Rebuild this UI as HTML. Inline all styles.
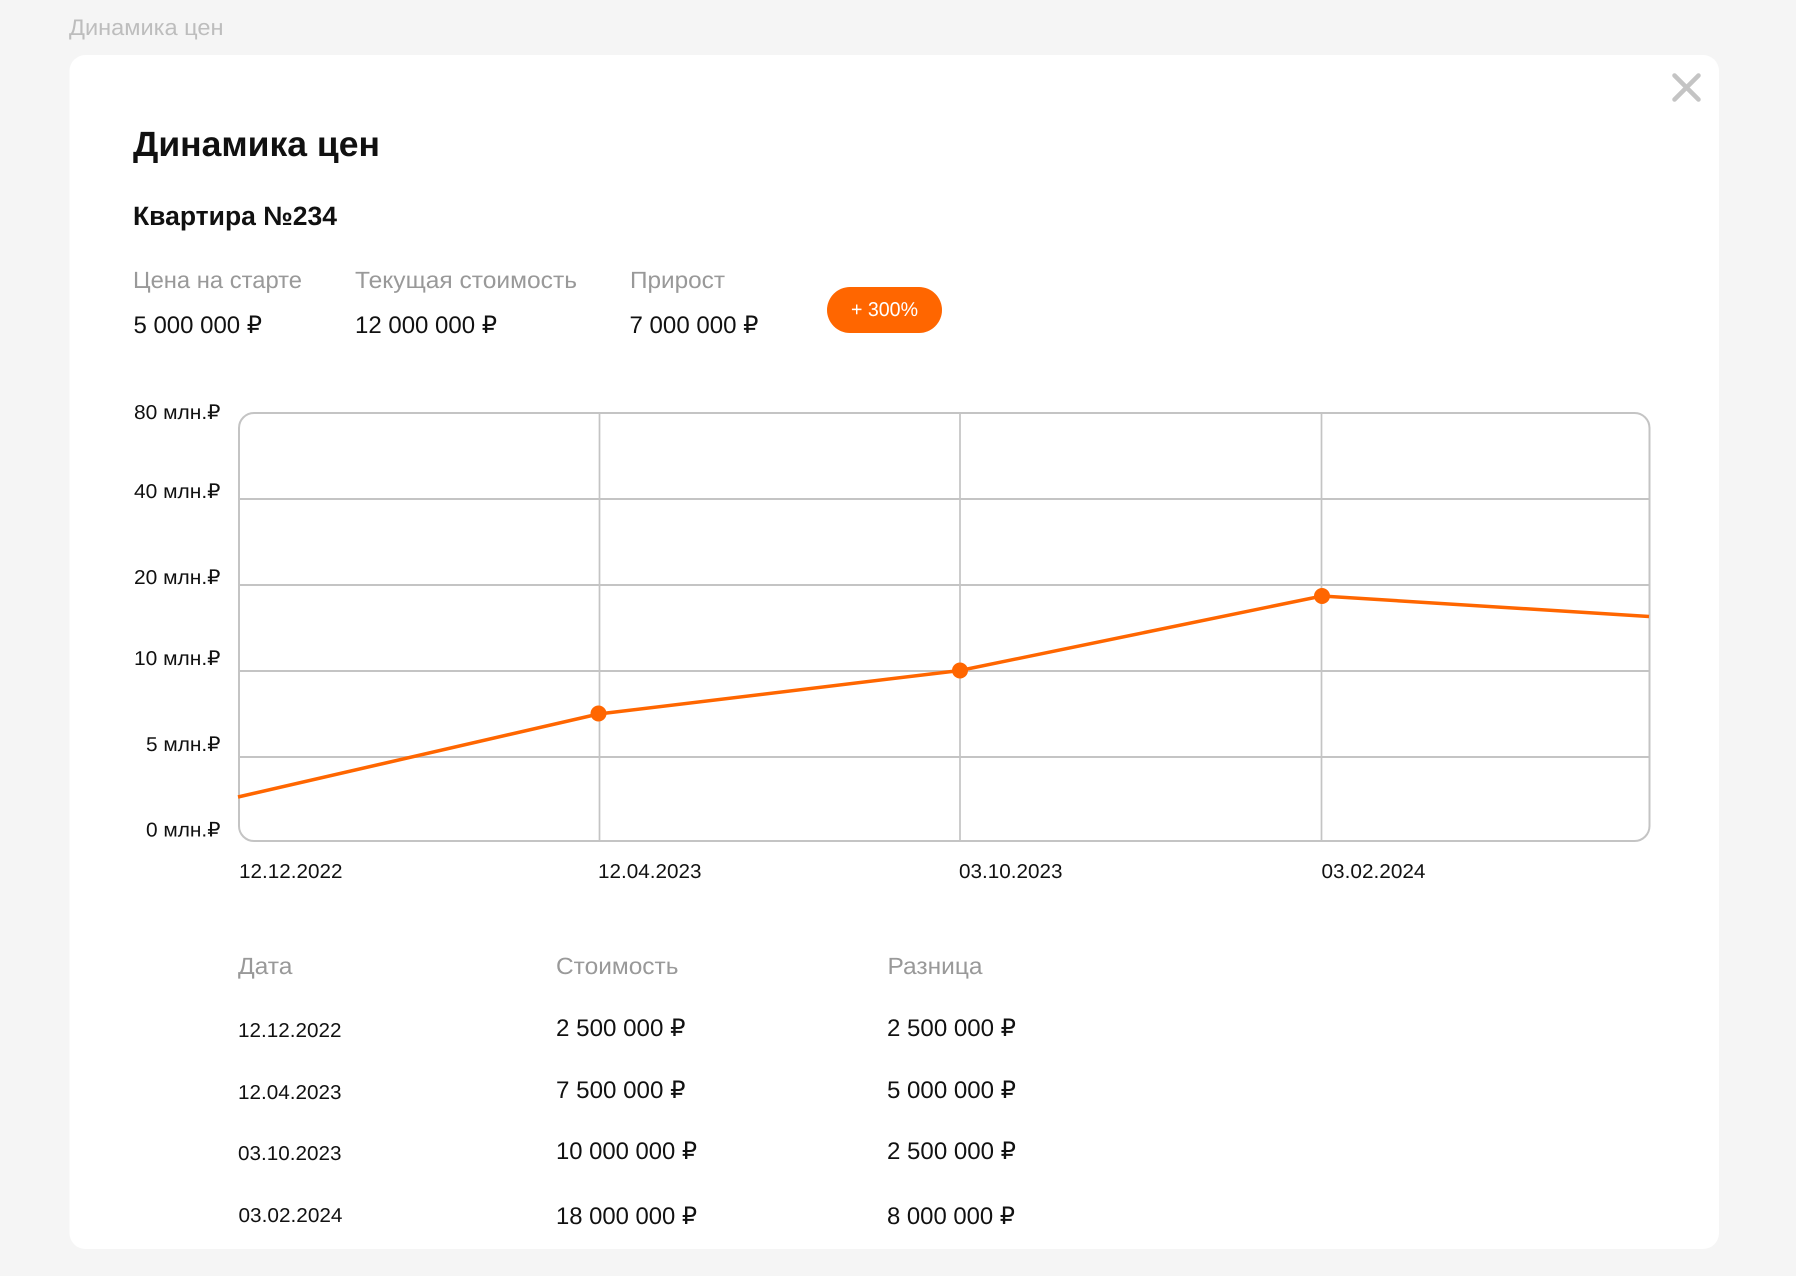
<!DOCTYPE html>
<html lang="ru"><head><meta charset="utf-8"><title>Динамика цен</title>
<style>
html,body{margin:0;padding:0;background:#f5f5f5;width:1796px;height:1276px;overflow:hidden}
svg{display:block}
text{font-family:"Liberation Sans","DejaVu Sans",sans-serif;text-rendering:geometricPrecision}
.l{font-size:23.5px;fill:#999}
.v{font-size:24px;fill:#111}
.a{font-size:20px;fill:#111}
</style></head><body>
<svg width="1796" height="1276" viewBox="0 0 1796 1276" xmlns="http://www.w3.org/2000/svg">
<rect width="1796" height="1276" fill="#f5f5f5"/>
<text x="69" y="35" font-size="22.5" fill="#bdbdbd" textLength="154.5" lengthAdjust="spacingAndGlyphs">Динамика цен</text>
<rect x="69.5" y="55" width="1649.5" height="1194" rx="16" fill="#fff"/>
<path d="M1674.5 75.5L1698.5 99.5M1698.5 75.5L1674.5 99.5" stroke="#c4c4c4" stroke-width="4.5" stroke-linecap="round" fill="none"/>
<text x="133" y="156" font-size="35" font-weight="700" fill="#111" textLength="247" lengthAdjust="spacingAndGlyphs">Динамика цен</text>
<text x="133" y="225" font-size="26.5" font-weight="700" fill="#111" textLength="204" lengthAdjust="spacingAndGlyphs">Квартира №234</text>
<text class="l" x="133" y="288" textLength="169" lengthAdjust="spacingAndGlyphs">Цена на старте</text>
<text class="l" x="355" y="288" textLength="222" lengthAdjust="spacingAndGlyphs">Текущая стоимость</text>
<text class="l" x="630" y="288" textLength="95" lengthAdjust="spacingAndGlyphs">Прирост</text>
<text class="v" x="133.5" y="333" textLength="128.5" lengthAdjust="spacingAndGlyphs">5 000 000 ₽</text>
<text class="v" x="355" y="333" textLength="142" lengthAdjust="spacingAndGlyphs">12 000 000 ₽</text>
<text class="v" x="629.5" y="333" textLength="129" lengthAdjust="spacingAndGlyphs">7 000 000 ₽</text>
<rect x="827" y="287" width="115" height="46" rx="23" fill="#ff6600"/>
<text x="851" y="316" font-size="20" fill="#fff" textLength="67" lengthAdjust="spacingAndGlyphs">+ 300%</text>

<g fill="none" stroke="#c4c4c4" stroke-width="2">
<path d="M239 499H1649M239 585H1649M239 671H1649M239 757H1649"/>
<path d="M599.5 413V841M960 413V841M1321.5 413V841" stroke-width="1.7"/>
<rect x="239" y="413" width="1410.5" height="428" rx="15"/>
</g>
<polyline points="238,797 598.5,714 960,670.5 1322,596 1649,616.5" fill="none" stroke="#ff6600" stroke-width="3.5"/>
<circle cx="598.5" cy="713.5" r="8" fill="#ff6600"/>
<circle cx="960" cy="670.5" r="8" fill="#ff6600"/>
<circle cx="1322" cy="596" r="8" fill="#ff6600"/>

<text class="a" x="134" y="419" textLength="86.5" lengthAdjust="spacingAndGlyphs">80 млн.₽</text>
<text class="a" x="134" y="498" textLength="86.5" lengthAdjust="spacingAndGlyphs">40 млн.₽</text>
<text class="a" x="134" y="584" textLength="86.5" lengthAdjust="spacingAndGlyphs">20 млн.₽</text>
<text class="a" x="134" y="665" textLength="86.5" lengthAdjust="spacingAndGlyphs">10 млн.₽</text>
<text class="a" x="146" y="751" textLength="74.5" lengthAdjust="spacingAndGlyphs">5 млн.₽</text>
<text class="a" x="146" y="836.5" textLength="74.5" lengthAdjust="spacingAndGlyphs">0 млн.₽</text>

<text class="a" x="239" y="878" textLength="103.5" lengthAdjust="spacingAndGlyphs">12.12.2022</text>
<text class="a" x="598" y="878" textLength="103.5" lengthAdjust="spacingAndGlyphs">12.04.2023</text>
<text class="a" x="959" y="878" textLength="103.5" lengthAdjust="spacingAndGlyphs">03.10.2023</text>
<text class="a" x="1321.5" y="878" textLength="104" lengthAdjust="spacingAndGlyphs">03.02.2024</text>

<text class="l" x="238" y="974" textLength="54.5" lengthAdjust="spacingAndGlyphs">Дата</text>
<text class="l" x="556" y="974" textLength="122.5" lengthAdjust="spacingAndGlyphs">Стоимость</text>
<text class="l" x="887.5" y="974" textLength="95" lengthAdjust="spacingAndGlyphs">Разница</text>

<text class="a" x="238" y="1037" textLength="103.5" lengthAdjust="spacingAndGlyphs">12.12.2022</text>
<text class="a" x="238" y="1099" textLength="103.5" lengthAdjust="spacingAndGlyphs">12.04.2023</text>
<text class="a" x="238" y="1160" textLength="103.5" lengthAdjust="spacingAndGlyphs">03.10.2023</text>
<text class="a" x="238.5" y="1222" textLength="104" lengthAdjust="spacingAndGlyphs">03.02.2024</text>

<text class="v" x="556" y="1036" textLength="129.5" lengthAdjust="spacingAndGlyphs">2 500 000 ₽</text>
<text class="v" x="556" y="1098" textLength="129.5" lengthAdjust="spacingAndGlyphs">7 500 000 ₽</text>
<text class="v" x="556" y="1159" textLength="141" lengthAdjust="spacingAndGlyphs">10 000 000 ₽</text>
<text class="v" x="556" y="1224" textLength="141" lengthAdjust="spacingAndGlyphs">18 000 000 ₽</text>

<text class="v" x="887" y="1036" textLength="129" lengthAdjust="spacingAndGlyphs">2 500 000 ₽</text>
<text class="v" x="887" y="1098" textLength="129" lengthAdjust="spacingAndGlyphs">5 000 000 ₽</text>
<text class="v" x="887" y="1159" textLength="129" lengthAdjust="spacingAndGlyphs">2 500 000 ₽</text>
<text class="v" x="887" y="1224" textLength="128" lengthAdjust="spacingAndGlyphs">8 000 000 ₽</text>
</svg>
</body></html>
